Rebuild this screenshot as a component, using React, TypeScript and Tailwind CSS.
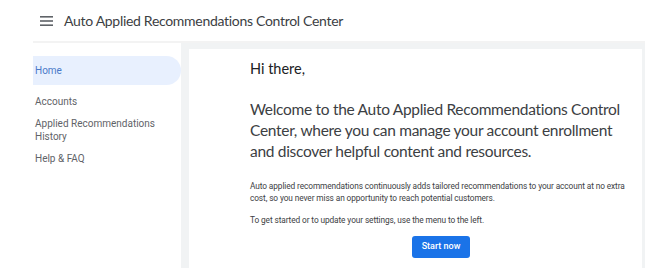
const navItems = ['Accounts', 'Applied Recommendations History', 'Help & FAQ'];

export default function App() {
  return (
    <div className="w-[650px] h-[276px] bg-white overflow-hidden text-[#3c4043]" style={{ fontFamily: 'Roboto, Arial, sans-serif' }}>
      <header className="h-[41px] flex items-center pl-[40px] gap-[11px]">
        <svg width="13" height="10" viewBox="0 0 13 10" className="text-[#5f6368]">
          <rect x="0" y="0" width="13" height="1.6" fill="currentColor" />
          <rect x="0" y="4.2" width="13" height="1.6" fill="currentColor" />
          <rect x="0" y="8.4" width="13" height="1.6" fill="currentColor" />
        </svg>
        <h1 className="text-[14px] tracking-[-0.3px] text-[#3c4043]" style={{ fontFamily: 'Lato, Roboto, sans-serif' }}>
          Auto Applied Recommendations Control Center
        </h1>
      </header>
      <div className="ml-[33px] w-[612px] h-[227px] flex border-t-[2px] border-[#f3f3f3]">
        <nav className="w-[148px] shrink-0 pt-[13px] text-[10px] leading-[13px] text-[#5f6368]">
          <div className="h-[29px] flex items-center pl-[2px] rounded-r-full bg-[#e8f0fe] text-[#4a7ac9]">Home</div>
          {navItems.map((item, i) => (
            <div key={item} className={`pl-[2px] ${i === 0 ? 'mt-[10px]' : 'mt-[9px]'}`}>{item}</div>
          ))}
        </nav>
        <main className="flex-1 bg-[#f1f3f4] pt-[6px] pl-[8px] pr-[3px]">
          <div className="h-full bg-white pl-[61px] pr-[6px] pt-[10px]" style={{ fontFamily: 'Lato, Roboto, sans-serif' }}>
            <p className="text-[14.5px] leading-[20px] text-[#202124]">Hi there,</p>
            <h2 className="mt-[20px] pr-[4px] text-[15.5px] tracking-[-0.3px] leading-[21px] text-[#3c4043]">
              Welcome to the Auto Applied Recommendations Control Center, where you can manage your account enrollment and discover helpful content and resources.
            </h2>
            <div style={{ fontFamily: 'Roboto, Arial, sans-serif' }}>
              <p className="mt-[18px] text-[8.3px] tracking-[-0.1px] leading-[12px] text-[#3c4043]">
                Auto applied recommendations continuously adds tailored recommendations to your account at no extra cost, so you never miss an opportunity to reach potential customers.
              </p>
              <p className="mt-[10px] text-[8.3px] tracking-[-0.1px] leading-[12px] text-[#3c4043]">To get started or to update your settings, use the menu to the left.</p>
              <div className="mt-[10px] flex justify-center pr-[4px]">
                <button className="w-[58px] h-[22px] rounded-[3px] bg-[#1a73e8] text-white text-[9px] font-medium">Start now</button>
              </div>
            </div>
          </div>
        </main>
      </div>
    </div>
  );
}
